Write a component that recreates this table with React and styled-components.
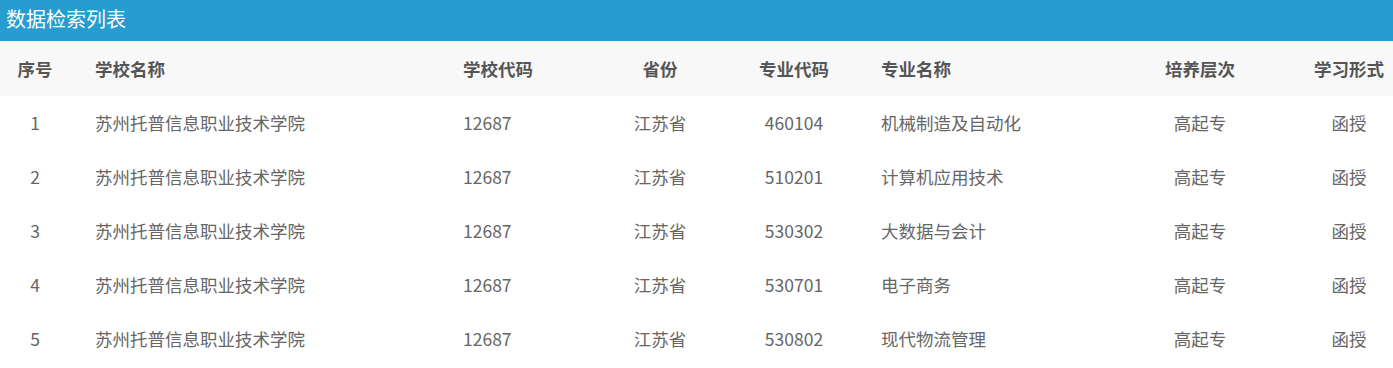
import React from "react";
import styled, { createGlobalStyle } from "styled-components";

const GlobalStyle = createGlobalStyle`
  body {
    margin: 0;
    background: #ffffff;
    font-family: "Microsoft YaHei", "Noto Sans CJK SC", "Noto Sans", sans-serif;
  }
`;

const columns = [
  { key: "index", title: "序号", width: 70, align: "center", pad: 0 },
  { key: "school", title: "学校名称", width: 368, align: "left", pad: 25 },
  { key: "schoolCode", title: "学校代码", width: 162, align: "left", pad: 25 },
  { key: "province", title: "省份", width: 120, align: "center", pad: 0 },
  { key: "majorCode", title: "专业代码", width: 148, align: "center", pad: 0 },
  { key: "major", title: "专业名称", width: 232, align: "left", pad: 13 },
  { key: "level", title: "培养层次", width: 200, align: "center", pad: 0 },
  { key: "mode", title: "学习形式", width: 93, align: "center", pad: 5 },
];

const rows = [
  { index: 1, majorCode: "460104", major: "机械制造及自动化" },
  { index: 2, majorCode: "510201", major: "计算机应用技术" },
  { index: 3, majorCode: "530302", major: "大数据与会计" },
  { index: 4, majorCode: "530701", major: "电子商务" },
  { index: 5, majorCode: "530802", major: "现代物流管理" },
].map((r) => ({
  ...r,
  school: "苏州托普信息职业技术学院",
  schoolCode: "12687",
  province: "江苏省",
  level: "高起专",
  mode: "函授",
}));

const template = columns.map((c) => `${c.width}px`).join(" ");

const StyledPanel = styled.div`
  width: 1393px;
`;

const StyledTitleBar = styled.div`
  height: 41px;
  background: #269ccf;
  color: #ffffff;
  font-size: 20px;
  line-height: 37px;
  padding-left: 6px;
`;

const StyledRow = styled.div`
  display: grid;
  grid-template-columns: ${template};
  height: ${(props) => (props.head ? "55px" : "54px")};
  align-items: center;
  background: ${(props) => (props.head ? "#f8f8f8" : "#ffffff")};
  color: ${(props) => (props.head ? "#555555" : "#666666")};
  font-size: 17.5px;
  font-weight: ${(props) => (props.head ? 700 : 400)};
`;

const StyledCell = styled.div`
  text-align: ${(props) => props.align};
  padding-left: ${(props) => props.pad}px;
  white-space: nowrap;
  line-height: 1;
`;

function App() {
  return (
    <>
      <GlobalStyle />
      <StyledPanel>
        <StyledTitleBar>数据检索列表</StyledTitleBar>
        <StyledRow head>
          {columns.map((c) => (
            <StyledCell key={c.key} align={c.align} pad={c.pad}>
              {c.title}
            </StyledCell>
          ))}
        </StyledRow>
        {rows.map((row) => (
          <StyledRow key={row.index}>
            {columns.map((c) => (
              <StyledCell key={c.key} align={c.align} pad={c.pad}>
                {row[c.key]}
              </StyledCell>
            ))}
          </StyledRow>
        ))}
      </StyledPanel>
    </>
  );
}

export default App;
